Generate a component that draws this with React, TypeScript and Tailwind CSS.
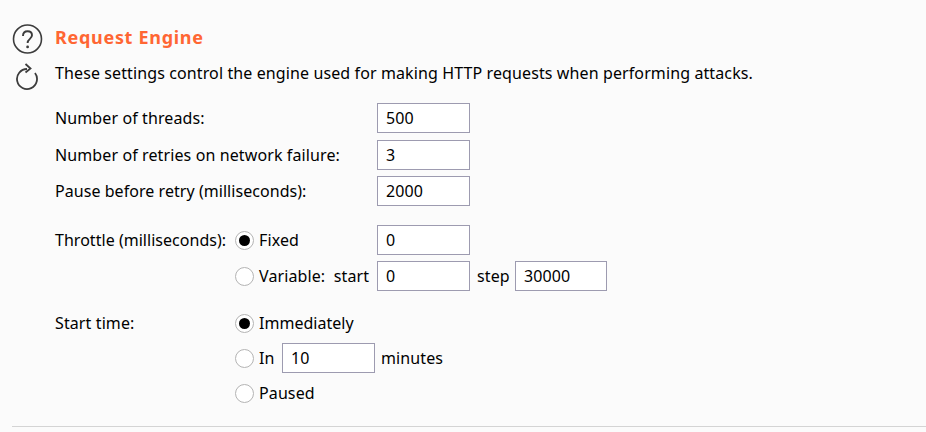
import React from 'react';

const font = "font-['Noto_Sans','Open_Sans',sans-serif]";

const Field = ({ value, className = 'w-[93px]' }: { value: string; className?: string }) => (
  <div className={`${className} h-[30px] shrink-0 bg-white border border-[#9d9bb0] pl-2 flex items-center`}>
    {value}
  </div>
);

const Radio = ({ checked = false }: { checked?: boolean }) => (
  <span className="w-[19px] h-[19px] shrink-0 rounded-full border border-[#b4b4b4] bg-white flex items-center justify-center">
    {checked && <span className="w-[11px] h-[11px] rounded-full bg-black" />}
  </span>
);

const HelpIcon = () => (
  <svg width="32" height="32" viewBox="0 0 32 32" fill="none" stroke="#3c3c3c">
    <circle cx="15.5" cy="16" r="14" strokeWidth="1.6" />
    <path d="M11 13c0-3 2-4.7 4.6-4.7s4.4 1.7 4.4 4c0 3.6-4.4 3.6-4.4 7.6" strokeWidth="1.9" />
    <circle cx="15.6" cy="23.9" r="1.4" fill="#3c3c3c" stroke="none" />
  </svg>
);

const RefreshIcon = () => (
  <svg width="26" height="30" viewBox="0 0 26 30" fill="none" stroke="#3c3c3c">
    <path d="M20 12A10 10 0 1 1 12 8" strokeWidth="1.8" />
    <path d="M10.5 3 15.5 7.5 10.5 11.5" strokeWidth="1.8" />
  </svg>
);

const BasicRow = ({ label, value, labelClass = '' }: { label: string; value: string; labelClass?: string }) => (
  <div className="flex items-center h-[30px]">
    <span className={`w-[322px] ${labelClass}`}>{label}</span>
    <Field value={value} />
  </div>
);

export default function App() {
  return (
    <div className={`${font} w-[926px] h-[432px] bg-[#fbfbfb] text-[16px] leading-[22px] tracking-[0.11px] text-black overflow-hidden`}>
      <div className="flex pt-[23px] pl-[12px]">
        <div className="w-[43px] shrink-0 flex flex-col">
          <HelpIcon />
          <div className="mt-[6px] ml-[3px]">
            <RefreshIcon />
          </div>
        </div>
        <div>
          <h2 className="text-[18px] leading-[28px] font-bold tracking-[0.7px] text-[#ff6633]">Request Engine</h2>
          <p className="mt-[11px]">These settings control the engine used for making HTTP requests when performing attacks.</p>

          <div className="mt-[19px] flex flex-col gap-[6.5px]">
            <BasicRow label="Number of threads:" value="500" />
            <BasicRow label="Number of retries on network failure:" value="3" />
            <BasicRow label="Pause before retry (milliseconds):" value="2000" labelClass="tracking-[0.05px]" />
          </div>

          <div className="mt-[19px] flex flex-col gap-[6px]">
            <div className="flex items-center h-[30px]">
              <span className="w-[180px] tracking-[0.03px]">Throttle (milliseconds):</span>
              <Radio checked />
              <span className="ml-[5px] w-[118px]">Fixed</span>
              <Field value="0" />
            </div>
            <div className="flex items-center h-[30px]">
              <span className="w-[180px]" />
              <Radio />
              <span className="ml-[5px] w-[118px]">Variable:&nbsp; start</span>
              <Field value="0" />
              <span className="ml-[7px] w-[38px]">step</span>
              <Field value="30000" className="w-[92px]" />
            </div>
          </div>

          <div className="mt-[17px] flex flex-col gap-[5px]">
            <div className="flex items-center h-[30px]">
              <span className="w-[180px]">Start time:</span>
              <Radio checked />
              <span className="ml-[5px] tracking-[0.02px]">Immediately</span>
            </div>
            <div className="flex items-center h-[30px]">
              <span className="w-[180px]" />
              <Radio />
              <span className="ml-[5px] w-[23px]">In</span>
              <Field value="10" />
              <span className="ml-[6px]">minutes</span>
            </div>
            <div className="flex items-center h-[30px]">
              <span className="w-[180px]" />
              <Radio />
              <span className="ml-[5px]">Paused</span>
            </div>
          </div>
        </div>
      </div>
      <div className="mt-[18px] ml-[12px] h-px bg-[#d4d4d4]" />
    </div>
  );
}
